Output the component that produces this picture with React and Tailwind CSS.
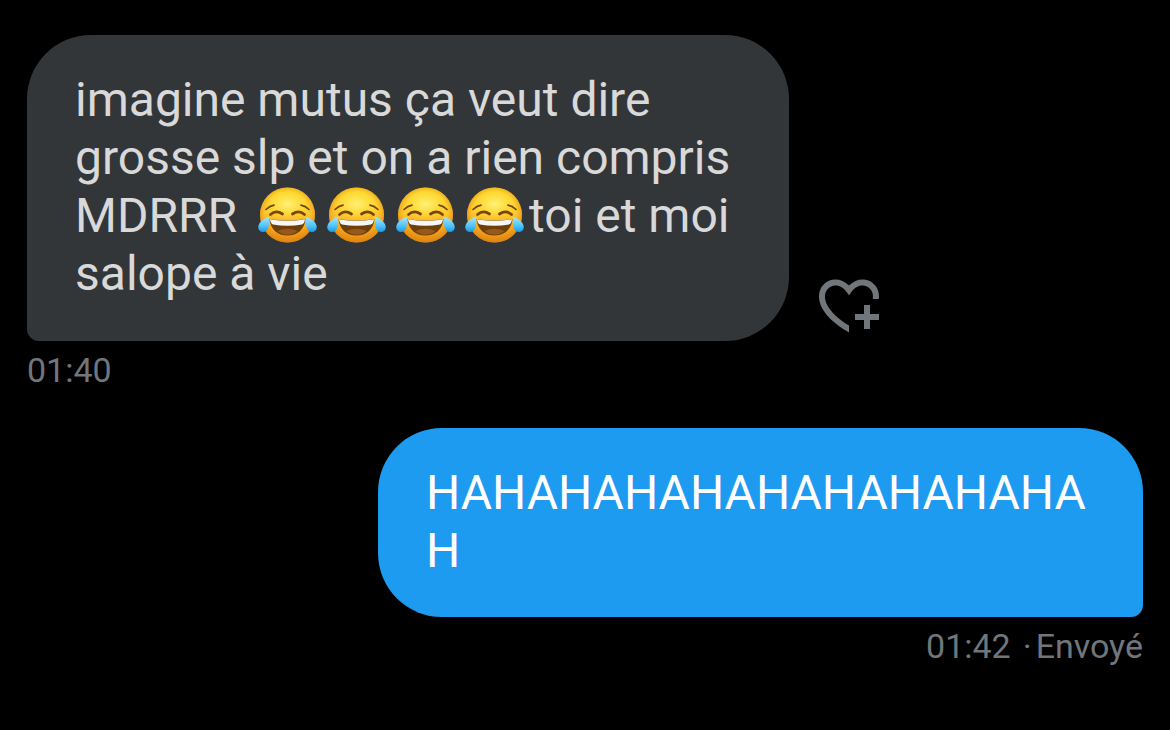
import React, { Fragment } from 'react'

const messages = [
  { id: 1, mine: false, text: ['imagine mutus ça veut dire grosse slp et on a rien compris MDRRR ', 4, 'toi et moi salope à vie'], time: '01:40' },
  { id: 2, mine: true, text: ['HAHAHAHAHAHAHAHAHAHAH'], time: '01:42', status: 'Envoyé' },
]

const JoyDefs = () => (
  <svg className="absolute w-0 h-0" aria-hidden="true">
    <defs>
      <linearGradient id="joyFace" x1="0" y1="0" x2="0" y2="1">
        <stop offset="0" stopColor="#fbd428" />
        <stop offset="0.45" stopColor="#fdca30" />
        <stop offset="0.75" stopColor="#f6a81e" />
        <stop offset="1" stopColor="#e08a12" />
      </linearGradient>
      <radialGradient id="joyEdge" cx="0.5" cy="0.47" r="0.56">
        <stop offset="0.7" stopColor="#e88a10" stopOpacity="0" />
        <stop offset="1" stopColor="#dd7c0c" stopOpacity="0.8" />
      </radialGradient>
      <radialGradient id="joyShine" cx="0.5" cy="0.5" r="0.5">
        <stop offset="0" stopColor="#fff27a" />
        <stop offset="1" stopColor="#ffe93b" stopOpacity="0" />
      </radialGradient>
      <linearGradient id="joyTear" x1="0" y1="0" x2="0" y2="1">
        <stop offset="0" stopColor="#a5e4ff" />
        <stop offset="0.6" stopColor="#4fc3fa" />
        <stop offset="1" stopColor="#159be6" />
      </linearGradient>
    </defs>
  </svg>
)

const Joy = () => (
  <svg viewBox="0 0 60 56" role="img" aria-label="😂" className="inline-block w-[61px] h-14 mx-1 -my-1 align-[-7px]">
    <circle cx="30" cy="28" r="27.5" fill="url(#joyFace)" />
    <ellipse cx="30" cy="17" rx="24" ry="16" fill="url(#joyShine)" />
    <circle cx="30" cy="28" r="27.5" fill="url(#joyEdge)" />
    {/* sourcils et yeux */}
    <g fill="none" stroke="#7a4508" strokeLinecap="round">
      <path d="M8.500 22.500Q12 19 16.500 18.200" strokeWidth="1.7" />
      <path d="M51.500 22.500Q48 19 43.500 18.200" strokeWidth="1.7" />
      <path d="M13 27.500Q18.500 22.700 25 27" strokeWidth="2.700" />
      <path d="M35 27Q41.500 22.700 47 27.500" strokeWidth="2.700" />
    </g>
    {/* bouche */}
    <path d="M12 32Q30 35 48 32C47 42.500 40 48.500 30 48.500S13 42.500 12 32Z" fill="#6f3f0a" />
    <path d="M20 44Q30 39.500 40 44Q36 47.700 30 47.700T20 44Z" fill="#96591a" />
    <path d="M12.500 32.2Q30 35.200 47.500 32.2Q47 36.500 44.500 37.500Q30 40 15.500 37.500Q13 36.500 12.500 32.2Z" fill="#f7f7f7" />
    {/* larmes */}
    <path d="M11.500 30C6.500 31 .8 35.500 .8 40C.8 43.200 3 45 5.700 45C10.500 45 12.500 38 11.500 30Z" fill="url(#joyTear)" />
    <path d="M48.500 30C53.500 31 59.200 35.500 59.200 40C59.200 43.200 57 45 54.300 45C49.500 45 47.500 38 48.500 30Z" fill="url(#joyTear)" />
  </svg>
)

const ReactButton = () => (
  <button type="button" aria-label="Réagir" className="shrink-0 text-[#71767b]">
    <svg viewBox="0 0 24 24" fill="currentColor" className="w-18 h-18">
      <path d="M17 12v3h-2.998v2h3v3h2v-3h3v-2h-3.001v-3H17zm-5 6.839c-3.871-2.34-6.053-4.639-7.127-6.609-1.112-2.04-1.031-3.7-.479-4.82.561-1.13 1.667-1.84 2.91-1.91 1.222-.06 2.68.51 3.892 2.16l.806 1.09.805-1.09c1.211-1.65 2.668-2.22 3.89-2.16 1.242.07 2.347.78 2.908 1.91.334.677.49 1.554.321 2.59h2.011c.153-1.283-.039-2.469-.539-3.48-.887-1.79-2.647-2.91-4.601-3.01-1.65-.09-3.367.56-4.796 2.01-1.43-1.45-3.147-2.1-4.798-2.01-1.954.1-3.714 1.22-4.601 3.01-.896 1.81-.846 4.17.514 6.67 1.353 2.48 4.003 5.12 8.382 7.67l.502.299v-2.32z" />
    </svg>
  </button>
)

const Message = ({ message }) => {
  const { mine, text, time, status } = message

  return (
    <div className={mine ? 'flex flex-col items-end' : 'flex flex-col items-start'}>
      <div className="flex items-end gap-6">
        <p
          className={
            mine
              ? 'max-w-[765px] px-12 pt-9 pb-[37px] rounded-[64px] rounded-br-xl bg-[#1d9bf0] text-white text-[48px] leading-[58px] break-all'
              : 'max-w-[762px] px-12 pt-9 pb-[38px] rounded-[64px] rounded-bl-xl bg-[#333639] text-[#d9d9d9] text-[48px] leading-[58px]'
          }
        >
          {text.map((part, i) =>
            typeof part === 'number' ? (
              <span key={i} className="ml-1">
                {[...Array(part)].map((_, j) => <Joy key={j} />)}
              </span>
            ) : (
              <Fragment key={i}>{part}</Fragment>
            )
          )}
        </p>
        {!mine && <ReactButton />}
      </div>
      <div className="mt-[7px] flex text-[34px] leading-[44px] text-[#71767b]">
        <time>{time}</time>
        {status && (
          <>
            <span className="ml-3 mr-1">·</span>
            <span>{status}</span>
          </>
        )}
      </div>
    </div>
  )
}

const App = () => (
  <main className="min-h-screen bg-black px-[27px] py-[35px] flex flex-col gap-9 font-[Roboto,sans-serif]">
    <JoyDefs />
    {messages.map(m => <Message key={m.id} message={m} />)}
  </main>
)

export default App
